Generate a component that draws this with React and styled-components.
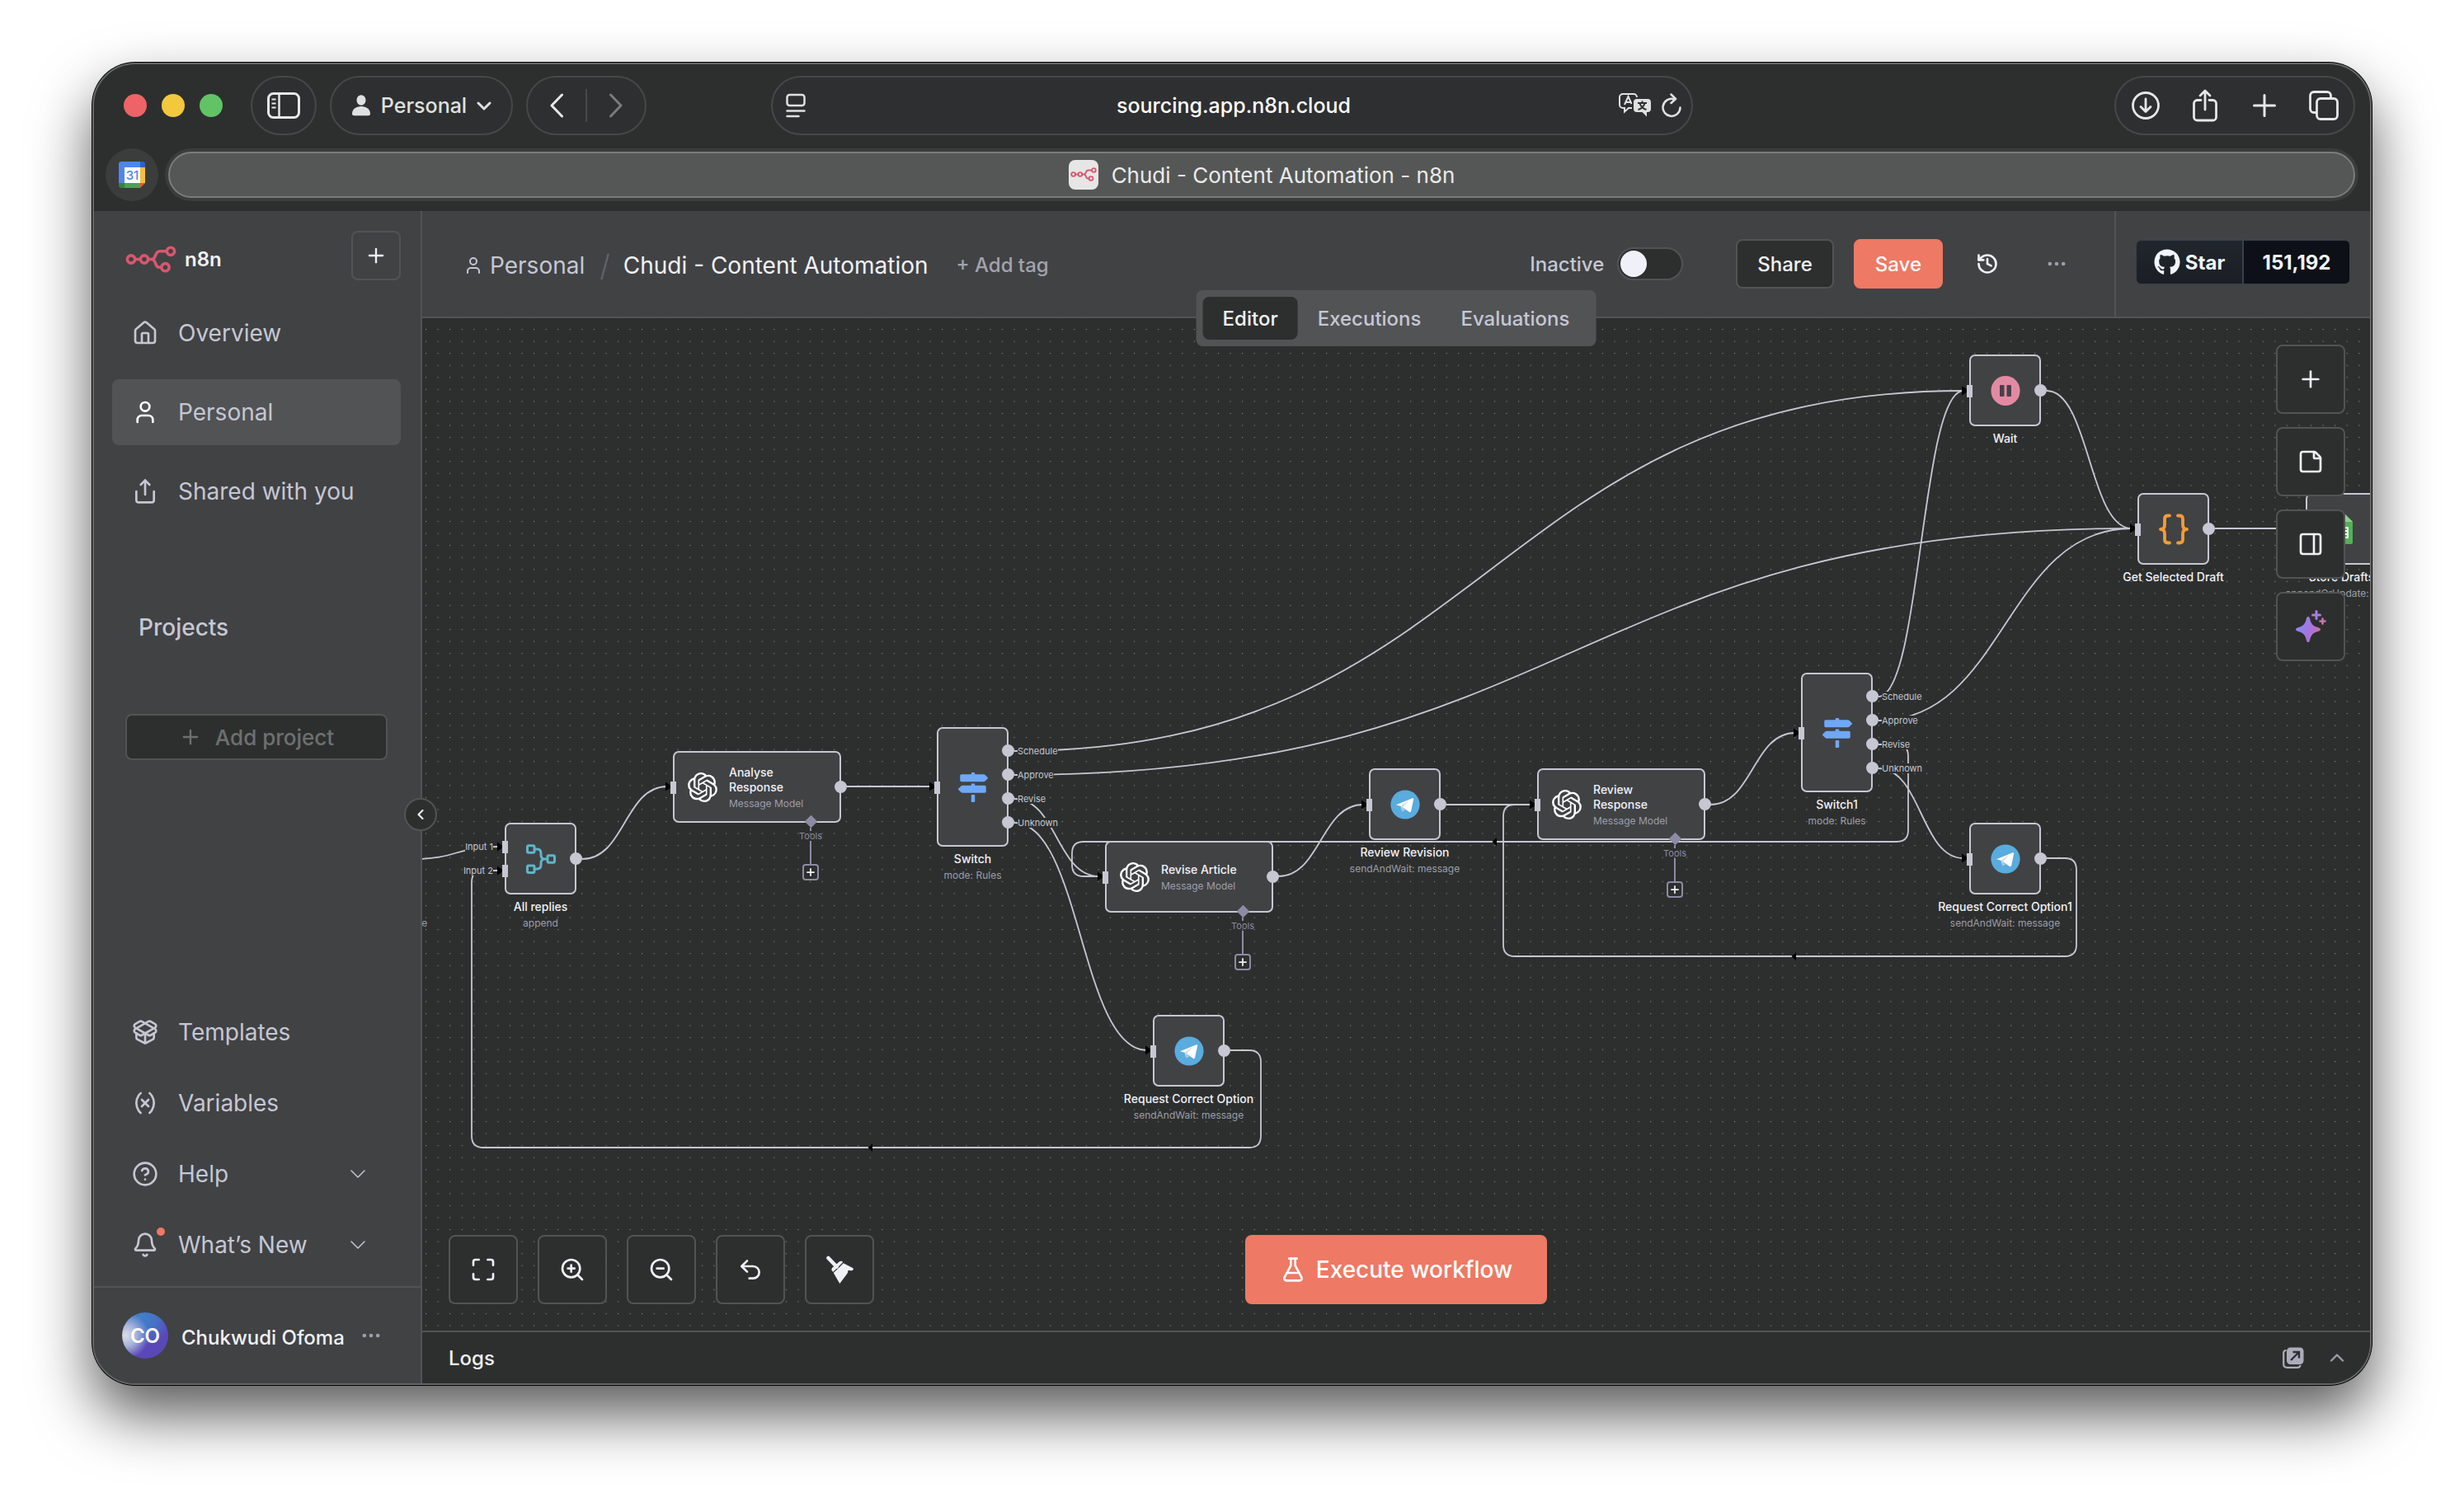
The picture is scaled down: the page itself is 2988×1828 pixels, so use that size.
import React from "react";
import styled, { createGlobalStyle, css } from "styled-components";
import {
  Bell, ChevronLeft, ChevronUp, CircleQuestionMark, Ellipsis, FlaskConical, History, House,
  Maximize, PackageOpen, PanelRight, Plus, Share, StickyNote, Undo2, User, Variable, ZoomIn, ZoomOut,
} from "lucide-react";
import { FaGithub, FaMapSigns } from "react-icons/fa";
import { SiOpenai } from "react-icons/si";

const c = {
  base: "#2d2f2e",
  panel: "#414244",
  raised: "#525355",
  line: "#525453",
  text: "#f0f1f8",
  soft: "#c5c7d3",
  muted: "#9c9ea9",
  wire: "#c5c7d3",
  tool: "#8b8ca3",
  accent: "#ee7964",
};

const Global = createGlobalStyle`
  * { box-sizing: border-box; }
  body { margin: 0; background: #fff; font-family: Inter, "Liberation Sans", sans-serif; color: ${c.text}; }
  button, input { font: inherit; color: inherit; margin: 0; }
  button { border: 0; background: none; padding: 0; cursor: pointer; display: inline-flex; align-items: center; justify-content: center; }
  a { color: inherit; text-decoration: none; }
  svg { display: block; flex: none; }
`;

/* ---------- window ---------- */
const Desktop = styled.div`
  min-height: 100vh;
  display: flex;
  padding: 76px 112px 148px;
`;
const Window = styled.div`
  flex: 1;
  min-width: 0;
  display: flex;
  flex-direction: column;
  background: ${c.base};
  border: 2px solid #656766;
  border-radius: 52px;
  overflow: hidden;
  box-shadow: 0 0 0 1px #000, 0 36px 72px rgba(0, 0, 0, 0.65);
`;
const Chrome = styled.div`
  display: flex;
  flex-direction: column;
  gap: 16px;
  padding: 14px 14px 12px;
`;
const ChromeRow = styled.div`
  display: grid;
  grid-template-columns: 1fr minmax(0, 1118px) 1fr;
  align-items: center;
  padding: 0 4px;
`;
const Left = styled.div`display: flex; align-items: center; gap: 16px;`;
const Right = styled.div`display: flex; justify-content: flex-end;`;
const Lights = styled.div`display: flex; gap: 18px; margin: 0 18px;`;
const Light = styled.button`
  width: 28px; height: 28px; border-radius: 50%;
  background: ${(p) => p.$color};
`;
const pill = css`
  height: 72px;
  border-radius: 36px;
  border: 2px solid #464847;
  background: #2e2f31;
`;
const ChromeButton = styled.button`
  ${pill}
  width: ${(p) => p.$width}px;
  gap: 12px;
  font-size: 25px;
  font-weight: 500;
  color: #dfe0df;
`;
const PillGroup = styled.div`
  ${pill}
  display: flex;
  align-items: center;
  width: ${(p) => p.$width}px;
  color: #e6e7e6;
`;
const GroupButton = styled.button`flex: 1; height: 100%; color: ${(p) => (p.$dim ? "#7b7c7d" : "inherit")};`;
const Divider = styled.span`width: 2px; height: 40px; background: #464847;`;
const Address = styled.div`
  ${pill}
  display: flex;
  align-items: center;
  gap: 12px;
  padding: 0 12px 0 16px;
  color: #e0e1e0;
`;
const AddressInput = styled.input`
  flex: 1;
  min-width: 0;
  border: 0;
  outline: 0;
  background: none;
  text-align: center;
  font-size: 25px;
  font-weight: 500;
  color: #fff;
  padding: 0 0 0 52px;
`;
const TabStrip = styled.div`display: flex; gap: 8px;`;
const PinnedTab = styled.button`width: 64px; height: 64px; border-radius: 50%; background: #3b3d3c;`;
const TabTrack = styled.div`flex: 1; display: flex; padding: 4px; border-radius: 32px; background: #3b3d3c;`;
const Tab = styled.button`
  flex: 1;
  height: 56px;
  border-radius: 28px;
  border: 2px solid #7b7d7c;
  background: #555756;
  gap: 16px;
  font-size: 26px;
  font-weight: 400;
  color: #eaebea;
`;
const Favicon = styled.span`
  width: 36px; height: 36px; border-radius: 8px; background: #e6e6e6;
  display: flex; align-items: center; justify-content: center;
`;

/* ---------- app shell ---------- */
const Shell = styled.div`flex: 1; min-height: 0; display: flex;`;
const Sidebar = styled.aside`
  position: relative;
  z-index: 3;
  width: 398px;
  flex: none;
  display: flex;
  flex-direction: column;
  background: ${c.panel};
  border-right: 2px solid ${c.raised};
`;
const Brand = styled.div`
  display: flex; align-items: center; justify-content: space-between;
  padding: 24px 24px 24px 38px;
`;
const Logo = styled.a`display: flex; align-items: center; gap: 10px; font-size: 24px; font-weight: 600; padding-top: 8px;`;
const SquareButton = styled.button`
  width: ${(p) => p.$size}px;
  height: ${(p) => p.$size}px;
  border: 2px solid ${c.line};
  border-radius: 8px;
  background: ${(p) => (p.$filled ? c.base : "transparent")};
  color: ${c.text};
`;
const Menu = styled.nav`display: flex; flex-direction: column; gap: ${(p) => p.$gap}px; padding: 0 24px 0 22px;`;
const MenuItem = styled.a`
  position: relative;
  display: flex;
  align-items: center;
  gap: 24px;
  height: 80px;
  padding: 0 42px 0 24px;
  border-radius: 8px;
  font-size: 28px;
  color: ${c.soft};
  background: ${(p) => (p.$active ? c.raised : "transparent")};
  svg:first-child { color: ${(p) => (p.$active ? "#fff" : c.soft)}; }
`;
const Grow = styled.span`flex: 1;`;
const Dot = styled.span`
  position: absolute; left: 54px; top: 19px;
  width: 10px; height: 10px; border-radius: 50%; background: ${c.accent};
`;
const SectionTitle = styled.h2`
  margin: 108px 0 88px;
  padding-left: 54px;
  font-size: 28px;
  line-height: 34px;
  font-weight: 500;
  color: ${c.soft};
`;
const AddProject = styled.button`
  height: 56px;
  margin: 0 40px 0 38px;
  gap: 16px;
  border: 2px solid ${c.line};
  border-radius: 8px;
  background: ${c.base};
  color: #6e7070;
  font-size: 26px;
  font-weight: 500;
`;
const Collapse = styled.button`
  position: absolute; right: -20px; top: 712px;
  width: 40px; height: 40px; border-radius: 50%;
  border: 2px solid ${c.line}; background: ${c.base}; color: ${c.text};
`;
const Account = styled.div`
  display: flex;
  align-items: center;
  height: 118px;
  margin-top: 10px;
  padding: 0 46px 0 34px;
  border-top: 2px solid ${c.raised};
  font-size: 24px;
  font-weight: 500;
`;
const Avatar = styled.span`
  width: 56px; height: 56px; border-radius: 50%;
  display: flex; align-items: center; justify-content: center;
  margin-right: 16px;
  font-size: 24px; font-weight: 600; color: #fff;
  background: radial-gradient(circle at 8% 50%, #dcdde6 0%, #a7b4dc 22%, transparent 48%),
    radial-gradient(circle at 42% 8%, #417fc8 0%, #4573c6 30%, transparent 60%), #5a48b8;
`;
const AccountName = styled.span`flex: 1; white-space: nowrap; padding-top: 4px;`;
const MutedButton = styled.button`color: ${c.muted};`;

const Main = styled.main`flex: 1; min-width: 0; display: flex; flex-direction: column;`;
const Header = styled.header`
  display: flex;
  height: 130px;
  background: ${c.panel};
  border-bottom: 2px solid ${c.raised};
`;
const HeaderBody = styled.div`flex: 1; display: flex; align-items: center; padding: 0 40px 0 50px;`;
const Crumbs = styled.div`display: flex; align-items: center; gap: 8px; font-size: 28px; padding-top: 3px; color: ${c.soft};`;
const Slash = styled.span`color: #626467; font-size: 36px; font-weight: 300; margin: 0 8px 0 10px;`;
const Title = styled.h1`margin: 0; font-size: 28px; font-weight: 400; color: ${c.text};`;
const AddTag = styled.button`margin-left: 26px; font-size: 24px; font-weight: 500; color: #a1a3ae;`;
const Actions = styled.div`margin-left: auto; display: flex; align-items: center; gap: 24px;`;
const Switch = styled.label`
  display: flex; align-items: center; gap: 16px; margin-right: 40px;
  font-size: 24px; font-weight: 500; color: ${c.soft};
  input {
    appearance: none;
    width: 80px; height: 40px; border-radius: 20px;
    border: 2px solid ${c.raised};
    background: ${c.base};
    display: flex; align-items: center; padding: 0 2px;
  }
  input::before { content: ""; width: 32px; height: 32px; border-radius: 50%; background: ${c.text}; }
`;
const ActionButton = styled.button`
  height: 60px;
  padding: 0 24px;
  border-radius: 8px;
  border: 2px solid ${(p) => (p.$primary ? c.accent : c.line)};
  background: ${(p) => (p.$primary ? c.accent : c.base)};
  font-size: 24px;
  font-weight: 500;
  color: ${(p) => (p.$primary ? "#fff" : c.text)};
`;
const IconButton = styled.button`width: 60px; height: 60px; color: ${(p) => (p.$muted ? c.muted : c.text)};`;
const GithubCell = styled.div`
  width: 310px;
  display: flex;
  align-items: center;
  justify-content: center;
  padding-bottom: 4px;
  border-left: 2px solid ${c.raised};
`;
const Github = styled.a`
  display: flex;
  border: 1px solid #38414b;
  border-radius: 6px;
  overflow: hidden;
  font-size: 24px;
  font-weight: 700;
  color: #f0f6fc;
  span {
    width: 128px; height: 52px;
    display: flex; align-items: center; justify-content: center; gap: 6px;
    background: linear-gradient(#21262d, #1b1e24);
  }
  span + span { background: #0d1016; border-left: 2px solid #38414b; width: 130px; }
`;

/* ---------- canvas ---------- */
const CanvasWrap = styled.div`position: relative; flex: 1; min-height: 0;`;
const Canvas = styled.div`position: absolute; inset: 0; overflow: hidden; background: ${c.base};`;
const Layer = styled.svg`position: absolute; inset: 0; width: 100%; height: 100%;`;
const Tabs = styled.div`
  position: absolute;
  z-index: 2;
  top: -34px;
  left: 50%;
  transform: translateX(-50%);
  display: flex;
  padding: 8px;
  border-radius: 8px;
  background: ${c.raised};
`;
const TabButton = styled.button`
  height: 52px;
  padding: 0 24px;
  border-radius: 8px;
  font-size: 24px;
  font-weight: 500;
  background: ${(p) => (p.$active ? c.base : "transparent")};
  color: ${(p) => (p.$active ? c.text : c.soft)};
`;
const SideTools = styled.div`
  position: absolute; top: 32px; right: 30px;
  display: flex; flex-direction: column; gap: 16px;
`;
const BottomTools = styled.div`
  position: absolute; left: 32px; right: 32px; bottom: 32px;
  display: grid; grid-template-columns: 1fr auto 1fr;
`;
const ViewTools = styled.div`display: flex; gap: 24px;`;
const Execute = styled.button`
  height: 84px;
  padding: 0 42px;
  gap: 12px;
  border-radius: 8px;
  background: ${c.accent};
  color: #fff;
  font-size: 28px;
  font-weight: 500;
`;
const NodeBox = styled.div`
  position: absolute;
  left: ${(p) => p.$x}px;
  top: ${(p) => p.$y}px;
  width: ${(p) => p.$w}px;
  height: ${(p) => p.$h}px;
  display: flex;
  align-items: center;
  justify-content: ${(p) => (p.$wide ? "flex-start" : "center")};
  gap: 14px;
  padding-left: ${(p) => (p.$wide ? 16 : 0)}px;
  border: 2px solid ${c.wire};
  border-radius: 7px;
  background: ${c.panel};
`;
const NodeTitle = styled.div`font-size: 14px; line-height: 18px; font-weight: 500; color: ${c.text};`;
const NodeSub = styled.div`font-size: 12px; line-height: 22px; color: ${c.muted}; white-space: nowrap;`;
const NodeInfo = styled.div`width: 96px; padding-top: 4px;`;
const Caption = styled.div`
  position: absolute;
  top: 100%;
  left: 50%;
  transform: translateX(-50%);
  padding-top: 8px;
  text-align: center;
  white-space: nowrap;
`;
const Port = styled.span`
  position: absolute; right: -9px; top: ${(p) => p.$y - 10}px;
  width: 15px; height: 15px; border-radius: 50%; background: ${c.wire};
`;
const InPort = styled.span`
  position: absolute; left: -5px; top: ${(p) => p.$y - 9}px;
  width: 7px; height: 15px; background: ${c.wire};
`;
const PortLabel = styled.span`
  position: absolute;
  top: ${(p) => p.$y - 8}px;
  ${(p) => (p.$in ? "right: calc(100% + 16px);" : "left: calc(100% + 13px);")}
  font-size: 11px;
  line-height: 12px;
  white-space: nowrap;
  color: ${c.soft};
  background: ${c.base};
`;
const Tools = styled.div`
  position: absolute;
  left: 150px;
  top: 100%;
  width: 30px;
  display: flex;
  flex-direction: column;
  align-items: center;
  color: ${c.tool};
  font-size: 11px;
  line-height: 12px;
`;
const Diamond = styled.span`
  width: 11px; height: 11px; margin: -5px 0 2px;
  background: ${c.tool}; transform: rotate(45deg);
`;
const Stem = styled.span`width: 2px; height: ${(p) => p.$h}px; background: ${c.tool};`;
const AddTool = styled.button`width: 20px; height: 20px; border: 2px solid ${c.tool}; border-radius: 4px; color: ${c.text};`;

const Logs = styled.footer`
  display: flex;
  align-items: center;
  height: 64px;
  padding: 0 26px 0 32px;
  border-top: 2px solid ${c.line};
  background: ${c.base};
  font-size: 24px;
  font-weight: 500;
`;
const LogActions = styled.div`margin-left: auto; display: flex; align-items: center; gap: 26px; color: #abadba;`;

/* ---------- drawings ---------- */
const N8nMark = ({ w }) => (
  <svg width={w} viewBox="0 0 62 33" fill="none" stroke="#d9576f" strokeWidth="3.600">
    <circle cx="7" cy="16.5" r="4.6" /><circle cx="23" cy="16.5" r="4.6" />
    <circle cx="55" cy="6.8" r="4.6" /><circle cx="48.5" cy="26.2" r="4.6" />
    <path d="M12 16.5h6M28 16.5h4c6 0 3-9.700 10-9.700h8M32 16.500c6 0 3 9.700 9 9.700h3" />
  </svg>
);
const SidebarGlyph = () => (
  <svg width="40" height="32" viewBox="0 0 40 32" fill="none" stroke="#e6e7e6" strokeWidth="3">
    <rect x="1.500" y="1.500" width="37" height="29" rx="6" /><path d="M14.500 2v28" strokeWidth="2.500" />
    <path d="M5.500 8.500h5M5.500 13.500h5M5.500 18.500h5" strokeWidth="2" />
  </svg>
);
const Person = () => (
  <svg width="24" height="26" viewBox="0 0 24 26" fill="#dfe0df">
    <ellipse cx="12" cy="6.500" rx="5.500" ry="6.200" /><path d="M1 23c0-5.500 4.500-9 11-9s11 3.500 11 9c0 1.500-1 2.200-2.500 2.200h-17C2 25.200 1 24.500 1 23z" />
  </svg>
);
const Chev = ({ w = 18, h = 11, sw = 3, d }) => (
  <svg width={w} height={h} viewBox={`0 0 ${w} ${h}`} fill="none" stroke="currentColor" strokeWidth={sw} strokeLinecap="round" strokeLinejoin="round">
    <path d={d} />
  </svg>
);
const Reader = () => (
  <svg width="24" height="30" viewBox="0 0 24 30" fill="none" stroke="#e0e1e0" strokeWidth="2.500" strokeLinecap="round">
    <rect x="1.500" y="2" width="21" height="13" rx="3" /><path d="M1.500 21.500h21M1.500 28h14" />
  </svg>
);
const Translate = () => (
  <svg width="40" height="30" viewBox="0 0 40 30" fill="none" stroke="#e0e1e0" strokeWidth="2">
    <path d="M16 18h-4l-5 4.500V18H5a4 4 0 0 1-4-4V5a4 4 0 0 1 4-4h13a4 4 0 0 1 4 4" />
    <path d="M7 14l4.500-10L15.500 13M8.500 11h5.500" />
    <path d="M22 7h13a4 4 0 0 1 4 4v8a4 4 0 0 1-4 4h-1v5.500L28.500 23H22a4 4 0 0 1-4-4v-8a4 4 0 0 1 4-4z" fill="#e0e1e0" stroke="none" />
    <path d="M23 12h11M28.500 9.500V12M31.500 12c-1 4-4 7-8 8M25.500 12c1 4 4 7 8 8" stroke="#2e2f31" />
  </svg>
);
const Reload = () => (
  <svg width="24" height="30" viewBox="0 0 24 30" fill="none" stroke="#e0e1e0" strokeWidth="2.500" strokeLinecap="round" strokeLinejoin="round">
    <path d="M14.500 7.200A10.500 10.500 0 1 0 22.500 17.500M11.500 1.500l5.500 5.500-5.500 5" />
  </svg>
);
const DownloadGlyph = () => (
  <svg width="36" height="36" viewBox="0 0 36 36" fill="none" stroke="currentColor" strokeWidth="2.800" strokeLinecap="round" strokeLinejoin="round">
    <circle cx="18" cy="18" r="15.500" /><path d="M18 10v15.500M12 19.500l6 6 6-6" />
  </svg>
);
const ShareGlyph = () => (
  <svg width="32" height="40" viewBox="0 0 32 40" fill="none" stroke="currentColor" strokeWidth="2.800" strokeLinecap="round" strokeLinejoin="round">
    <path d="M11 13.500H6.500a4 4 0 0 0-4 4V34a4 4 0 0 0 4 4h19a4 4 0 0 0 4-4V17.500a4 4 0 0 0-4-4H21M16 25V2.500M10 8l6-6 6 6" />
  </svg>
);
const PlusGlyph = () => (
  <svg width="28" height="28" viewBox="0 0 28 28" fill="none" stroke="currentColor" strokeWidth="3" strokeLinecap="round"><path d="M14 1.500v25M1.500 14h25" /></svg>
);
const TabsGlyph = () => (
  <svg width="36" height="36" viewBox="0 0 36 36" fill="none" stroke="currentColor" strokeWidth="2.800">
    <rect x="9.500" y="9.500" width="25" height="25" rx="4.500" /><path d="M9.500 26.500H6a4.500 4.500 0 0 1-4.500-4.500V6A4.500 4.500 0 0 1 6 1.500h16A4.500 4.500 0 0 1 26.500 6v3.500" />
  </svg>
);
const Calendar = () => (
  <svg width="32" height="32" viewBox="0 0 32 32">
    <path d="M3 0h23v7H7v19H0V3a3 3 0 0 1 3-3z" fill="#4f86ec" /><path d="M26 0h3a3 3 0 0 1 3 3v4h-6z" fill="#2d62c8" />
    <path d="M26 7h6v19h-6z" fill="#f3c13a" /><path d="M7 26h19v6H7z" fill="#4f9f55" /><path d="M0 26h7v6H3a3 3 0 0 1-3-3z" fill="#35813f" />
    <path d="M26 26h6l-6 6z" fill="#e2583e" /><path d="M7 7h19v19H7z" fill="#fff" />
    <text x="16.500" y="22" textAnchor="middle" fontSize="15" fontWeight="500" fill="#4f86ec">31</text>
  </svg>
);
const Broom = () => (
  <svg width="34" height="34" viewBox="0 0 34 34" fill={c.text}>
    <path d="M3.500 3l10 10.500" stroke={c.text} strokeWidth="4.600" strokeLinecap="round" />
    <path d="M17 7.200c2-1 3.200-.600 4.200.800L9.500 19.800c-2.200-1.200-2.800-3-1.200-5z" />
    <path d="M21.800 9.300l11.700 6c.6 1.400 0 2.700-1.500 3l-4.700-.300c.2 1.700-.2 3-1 4L17.300 34 9.800 21z" />
  </svg>
);
const Popout = () => (
  <svg width="26" height="26" viewBox="0 0 26 26">
    <path d="M4.500 4C2.500 4 1.200 5.200 1.200 7v13.500c0 2.700 1.600 4.300 4.300 4.300H18c2 0 3.200-1 3.500-3" fill="none" stroke="#abadba" strokeWidth="2.200" />
    <rect x="5" y="0.500" width="20.500" height="20.500" rx="4.500" fill="#abadba" />
    <path d="M10 16l9.500-9.500M12.500 6h7.500v7.500" fill="none" stroke={c.base} strokeWidth="2.400" />
  </svg>
);
const Sparkle = () => (
  <svg width="40" height="42" viewBox="0 0 40 42">
    <defs><linearGradient id="spark" x1="0" y1="0.300" x2="1" y2="0.600"><stop offset="0.100" stopColor="#8b86f0" /><stop offset="0.600" stopColor="#a873dd" /><stop offset="1" stopColor="#d0709a" /></linearGradient></defs>
    <path d="M17 9c1.400 0 1.800 1 2.100 2.200 1.300 6 3.300 9 9.500 10.700 4.500 1.200 4.500 3.800 0 5-6.200 1.700-8.200 4.700-9.500 10.700C18.800 38.800 18.400 40 17 40s-1.800-1.200-2.100-2.400c-1.300-6-3.300-9-9.500-10.700-4.500-1.200-4.500-3.800 0-5 6.200-1.700 8.200-4.700 9.500-10.700C15.200 10 15.600 9 17 9z" fill="url(#spark)" />
    <path d="M27 2.500v9M22.500 7h9" stroke="#a97be6" strokeWidth="3" strokeLinecap="round" />
    <path d="M34.500 11.500v6M31.500 14.500h6" stroke="#cb74b4" strokeWidth="2.600" strokeLinecap="round" />
  </svg>
);
const Telegram = () => (
  <svg width="36" height="36" viewBox="0 0 36 36">
    <circle cx="18" cy="18" r="17.600" fill="#5aabde" />
    <path d="M7 18.200L26.700 10.300c1-.3 1.600.2 1.400 1.400l-3 14.300c-.3 1.100-1 1.400-2 .9l-10-7z" fill="#fff" />
    <path d="M12.500 19.500l10.500-6.800-8.200 8.500-.5 5.500z" fill="#c9dfee" /><path d="M14.300 26.700l.6-5 3.700 2.600z" fill="#a9c9e0" />
  </svg>
);
const Merge = () => (
  <svg width="36" height="36" viewBox="0 0 36 36" fill="none" stroke="#5fb5c9" strokeWidth="3">
    <rect x="1.500" y="1.800" width="8.500" height="8.500" rx="1.500" /><rect x="1.500" y="26" width="8.500" height="8.500" rx="1.500" />
    <rect x="26" y="13.800" width="8.500" height="8.500" rx="1.500" />
    <path d="M10 6h3.500c3 0 4.500 2 4.500 5v2c0 3 1.500 5 4.500 5H26M10 30h3.500c3 0 4.500-2 4.500-5v-2c0-3 1.500-5 4.500-5" />
  </svg>
);
const Pause = () => (
  <svg width="36" height="36" viewBox="0 0 36 36"><rect x="0.500" y="0" width="35" height="36" rx="17.500" fill="#e38aa3" /><rect x="11" y="11" width="5.500" height="14" rx="1" fill="#49404a" /><rect x="19.500" y="11" width="5.500" height="14" rx="1" fill="#49404a" /></svg>
);
const Code = () => (
  <svg width="36" height="38" viewBox="0 0 36 38" fill="none" stroke="#f29c38" strokeWidth="3.800" strokeLinejoin="round" strokeLinecap="round">
    <path d="M13 2.500H11C8 2.500 7 4 7 6.500v7c0 3.500-1.500 5.500-5 5.500 3.500 0 5 2 5 5.500v7c0 2.500 1 4 4 4h2M23 2.500h2c3 0 4 1.500 4 4v7c0 3.500 1.500 5.500 5 5.500-3.500 0-5 2-5 5.500v7c0 2.500-1 4-4 4h-2" />
  </svg>
);
const Sheets = () => (
  <svg width="26" height="36" viewBox="0 0 26 36">
    <path d="M2 0h15l9 9v25a2 2 0 0 1-2 2H2a2 2 0 0 1-2-2V2a2 2 0 0 1 2-2z" fill="#52b057" /><path d="M17 0l9 9h-9z" fill="#8ed091" />
    <path d="M6 16h14v12H6zM6 20h14M6 24h14M13 16v12" fill="none" stroke="#fff" strokeWidth="1.800" />
  </svg>
);

/* ---------- workflow data ---------- */
const openai = <SiOpenai size={36} color="#fff" />;
const signs = <FaMapSigns size={36} color="#6ea8f7" />;
const branches = [["Schedule", 29], ["Approve", 58], ["Revise", 87], ["Unknown", 116]];
const nodes = [
  { id: "edge", x: -104, y: 612, sub: "sendAndWait: message", icon: <Telegram />, title: "\u00a0" },
  { id: "all", x: 100, y: 612, title: "All replies", sub: "append", icon: <Merge />, inputs: [["Input 1", 29], ["Input 2", 58]] },
  { id: "analyse", x: 304, y: 525, wide: true, title: "Analyse Response", sub: "Message Model", icon: openai },
  { id: "switch", x: 624, y: 496, h: 145, title: "Switch", sub: "mode: Rules", icon: signs, outputs: branches },
  { id: "revise", x: 828, y: 634, wide: true, title: "Revise Article", sub: "Message Model", icon: openai },
  { id: "review", x: 1148, y: 546, title: "Review Revision", sub: "sendAndWait: message", icon: <Telegram /> },
  { id: "option", x: 886, y: 845, title: "Request Correct Option", sub: "sendAndWait: message", icon: <Telegram /> },
  { id: "response", x: 1352, y: 546, wide: true, title: "Review Response", sub: "Message Model", icon: openai },
  { id: "switch1", x: 1672, y: 430, h: 145, title: "Switch1", sub: "mode: Rules", icon: signs, outputs: branches },
  { id: "option1", x: 1876, y: 612, title: "Request Correct Option1", sub: "sendAndWait: message", icon: <Telegram /> },
  { id: "wait", x: 1876, y: 44, title: "Wait", icon: <Pause /> },
  { id: "get", x: 2080, y: 212, title: "Get Selected Draft", icon: <Code /> },
  { id: "store", x: 2284, y: 212, title: "Store Drafts", sub: "appendOrUpdate: sheet", icon: <Sheets /> },
];
const curves = [
  [-10, 656, 93, 641], [194, 656, 297, 568], [515, 568, 617, 568],
  [718, 525, 1869, 88], [718, 554, 2073, 255], [718, 583, 821, 677], [718, 612, 879, 888],
  [1038, 677, 1141, 590], [1242, 590, 1345, 590], [1562, 590, 1665, 503],
  [1766, 459, 1869, 88], [1766, 488, 2073, 255], [1766, 546, 1869, 655],
  [1970, 88, 2073, 255], [2174, 255, 2277, 255],
];
const loops = [
  "M980 888H1003Q1017 888 1017 902V992Q1017 1006 1003 1006H74Q60 1006 60 992V684Q60 670 74 670H93",
  "M1766 517H1788Q1802 517 1802 531V621Q1802 635 1788 635H802Q788 635 788 649V663Q788 677 802 677H821",
  "M1970 655H1992Q2006 655 2006 669V760Q2006 774 1992 774H1325Q1311 774 1311 760V604Q1311 590 1325 590H1345",
];
const heads = curves.map((k) => [k[2], k[3]]).concat([[93, 670]]);
const backs = [[541, 1006], [1298, 635], [1661, 774]];

function FlowNode({ x, y, w, h = 87, wide, title, sub, icon, inputs, outputs }) {
  const width = w || (wide ? 204 : 87);
  const mid = Math.round(h / 2);
  return (
    <NodeBox $x={x} $y={y} $w={width} $h={h} $wide={wide}>
      {icon}
      {wide ? (
        <NodeInfo><NodeTitle>{title}</NodeTitle><NodeSub>{sub}</NodeSub></NodeInfo>
      ) : (
        <Caption><NodeTitle>{title}</NodeTitle>{sub && <NodeSub>{sub}</NodeSub>}</Caption>
      )}
      {(inputs || [["", mid]]).map(([label, py]) => (
        <React.Fragment key={py}>
          <InPort $y={py} />
          {label && <PortLabel $in $y={py}>{label}</PortLabel>}
        </React.Fragment>
      ))}
      {(outputs || [["", mid]]).map(([label, py]) => (
        <React.Fragment key={py}>
          <Port $y={py} />
          {label && <PortLabel $y={py}>{label}</PortLabel>}
        </React.Fragment>
      ))}
      {wide && (
        <Tools>
          <Diamond /><Stem $h={4} /><span>Tools</span><Stem $h={28} />
          <AddTool aria-label="Add tool"><Plus size={14} strokeWidth={3} /></AddTool>
        </Tools>
      )}
    </NodeBox>
  );
}

const topMenu = [["Overview", House], ["Personal", User, true], ["Shared with you", Share]];
const bottomMenu = [["Templates", PackageOpen], ["Variables", Variable], ["Help", CircleQuestionMark, true], ["What’s New", Bell, true, true]];

export default function App() {
  return (
    <>
      <Global />
      <Desktop>
        <Window>
          <Chrome>
            <ChromeRow>
              <Left>
                <Lights>
                  <Light $color="#ee6368" aria-label="Close" />
                  <Light $color="#f2c83e" aria-label="Minimise" />
                  <Light $color="#61c366" aria-label="Zoom" />
                </Lights>
                <ChromeButton $width={80} aria-label="Sidebar"><SidebarGlyph /></ChromeButton>
                <ChromeButton $width={222}><Person />Personal<Chev d="M2 2l7 7 7-7" /></ChromeButton>
                <PillGroup $width={146}>
                  <GroupButton aria-label="Back"><Chev w={18} h={30} d="M15.500 2L3 15l12.500 13" /></GroupButton>
                  <Divider />
                  <GroupButton $dim aria-label="Forward"><Chev w={18} h={30} d="M2.500 2L15 15 2.500 28" /></GroupButton>
                </PillGroup>
              </Left>
              <Address>
                <Reader />
                <AddressInput aria-label="Address" defaultValue="sourcing.app.n8n.cloud" />
                <Translate />
                <Reload />
              </Address>
              <Right>
                <PillGroup $width={292}>
                  <GroupButton aria-label="Downloads"><DownloadGlyph /></GroupButton>
                  <GroupButton aria-label="Share"><ShareGlyph /></GroupButton>
                  <GroupButton aria-label="New tab"><PlusGlyph /></GroupButton>
                  <GroupButton aria-label="Tab overview"><TabsGlyph /></GroupButton>
                </PillGroup>
              </Right>
            </ChromeRow>
            <TabStrip>
              <PinnedTab aria-label="Calendar"><Calendar /></PinnedTab>
              <TabTrack>
                <Tab><Favicon><N8nMark w={32} /></Favicon>Chudi - Content Automation - n8n</Tab>
              </TabTrack>
            </TabStrip>
          </Chrome>

          <Shell>
            <Sidebar>
              <Brand>
                <Logo href="#"><N8nMark w={62} />n8n</Logo>
                <SquareButton $size={60} aria-label="Create"><Plus size={28} /></SquareButton>
              </Brand>
              <Menu $gap={16}>
                {topMenu.map(([label, Icon, active]) => (
                  <MenuItem key={label} href="#" $active={active}><Icon size={32} />{label}</MenuItem>
                ))}
              </Menu>
              <SectionTitle>Projects</SectionTitle>
              <AddProject><Plus size={28} />Add project</AddProject>
              <Grow />
              <Menu $gap={6}>
                {bottomMenu.map(([label, Icon, more, dot]) => (
                  <MenuItem key={label} href="#">
                    <Icon size={32} />{label}
                    {more && <><Grow /><Chev w={20} h={11} sw={1.5} d="M2 1l8 8 8-8" /></>}
                    {dot && <Dot />}
                  </MenuItem>
                ))}
              </Menu>
              <Account>
                <Avatar>CO</Avatar>
                <AccountName>Chukwudi Ofoma</AccountName>
                <MutedButton aria-label="Account menu"><Ellipsis size={28} /></MutedButton>
              </Account>
              <Collapse aria-label="Collapse sidebar"><ChevronLeft size={20} strokeWidth={2.5} /></Collapse>
            </Sidebar>

            <Main>
              <Header>
                <HeaderBody>
                  <Crumbs>
                    <User size={24} /><a href="#">Personal</a><Slash>/</Slash>
                    <Title>Chudi - Content Automation</Title>
                    <AddTag>+ Add tag</AddTag>
                  </Crumbs>
                  <Actions>
                    <Switch>Inactive<input type="checkbox" /></Switch>
                    <ActionButton>Share</ActionButton>
                    <ActionButton $primary>Save</ActionButton>
                    <IconButton aria-label="History"><History size={28} strokeWidth={2.3} /></IconButton>
                    <IconButton $muted aria-label="More"><Ellipsis size={28} /></IconButton>
                  </Actions>
                </HeaderBody>
                <GithubCell>
                  <Github href="#"><span><FaGithub size={32} />Star</span><span>151,192</span></Github>
                </GithubCell>
              </Header>

              <CanvasWrap>
                <Canvas>
                  <Layer>
                    <defs>
                      <pattern id="dots" x="4" y="13" width="14.56" height="14.56" patternUnits="userSpaceOnUse">
                        <rect width="1.100" height="1.100" fill="#8e9091" />
                      </pattern>
                    </defs>
                    <rect width="100%" height="100%" fill="url(#dots)" />
                    <g fill="none" stroke={c.wire} strokeWidth="1.800">
                      {curves.map(([x1, y1, x2, y2]) => {
                        const m = (x1 + x2) / 2;
                        return <path key={`${x1}-${y1}`} d={`M${x1} ${y1}C${m} ${y1} ${m} ${y2} ${x2} ${y2}`} />;
                      })}
                      {loops.map((d) => <path key={d} d={d} />)}
                    </g>
                    {heads.map(([x, y], i) => <path key={i} d={`M${x - 2} ${y - 5.5}l6 4v3l-6 4z`} />)}
                    {backs.map(([x, y]) => <path key={x} d={`M${x + 5} ${y - 5}l-5.500 5 5.500 5z`} />)}
                  </Layer>
                  {nodes.map((n) => <FlowNode key={n.id} {...n} />)}
                  <SideTools>
                    <SquareButton $size={84} $filled aria-label="Add node"><Plus size={32} /></SquareButton>
                    <SquareButton $size={84} $filled aria-label="Add note"><StickyNote size={32} /></SquareButton>
                    <SquareButton $size={84} $filled aria-label="Toggle panel"><PanelRight size={32} /></SquareButton>
                    <SquareButton $size={84} $filled aria-label="Assistant"><Sparkle /></SquareButton>
                  </SideTools>
                  <BottomTools>
                    <ViewTools>
                      {[["Fit", Maximize], ["Zoom in", ZoomIn], ["Zoom out", ZoomOut], ["Undo", Undo2]].map(([label, Icon]) => (
                        <SquareButton key={label} $size={84} $filled aria-label={label}><Icon size={32} /></SquareButton>
                      ))}
                      <SquareButton $size={84} $filled aria-label="Tidy up"><Broom /></SquareButton>
                    </ViewTools>
                    <Execute><FlaskConical size={32} />Execute workflow</Execute>
                  </BottomTools>
                </Canvas>
                <Tabs>
                  <TabButton $active>Editor</TabButton>
                  <TabButton>Executions</TabButton>
                  <TabButton>Evaluations</TabButton>
                </Tabs>
              </CanvasWrap>

              <Logs>
                Logs
                <LogActions>
                  <MutedButton aria-label="Pop out"><Popout /></MutedButton>
                  <MutedButton aria-label="Expand logs"><ChevronUp size={28} /></MutedButton>
                </LogActions>
              </Logs>
            </Main>
          </Shell>
        </Window>
      </Desktop>
    </>
  );
}
